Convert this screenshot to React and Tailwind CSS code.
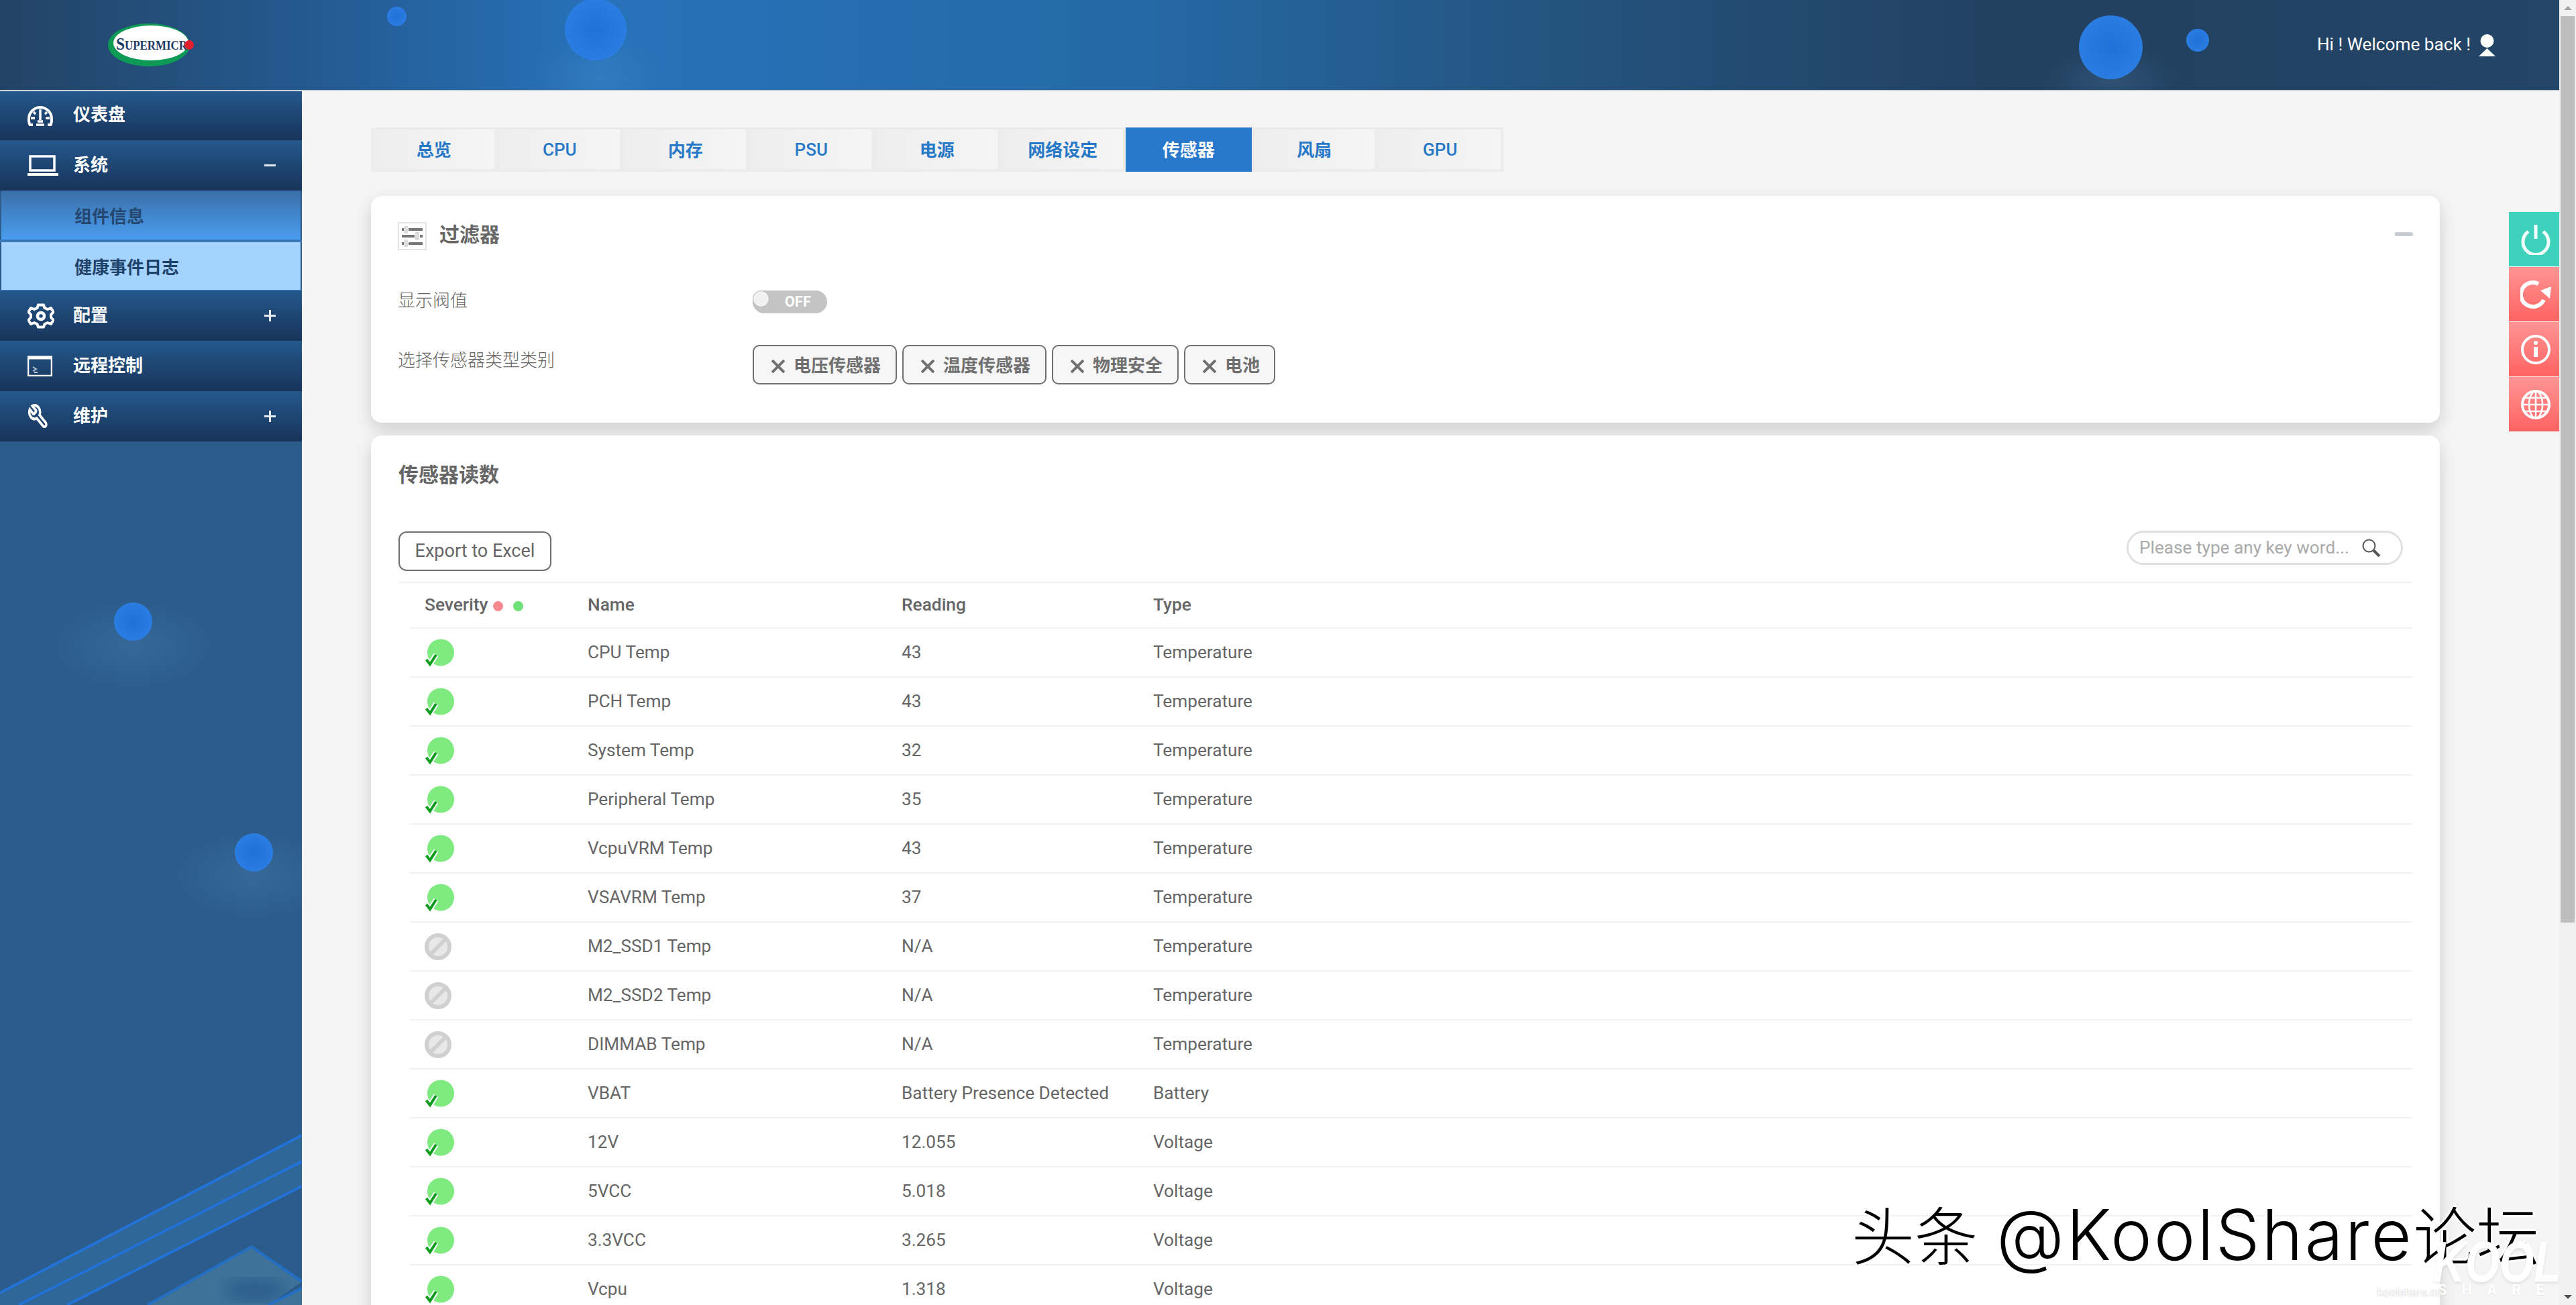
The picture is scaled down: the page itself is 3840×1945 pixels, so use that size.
import React from "react";

const tabs = ["总览", "CPU", "内存", "PSU", "电源", "网络设定", "传感器", "风扇", "GPU"];
const chips = [
  ["电压传感器", "w-[215px]"],
  ["温度传感器", "w-[215px]"],
  ["物理安全", "w-[189px]"],
  ["电池", "w-[136px]"],
];
const rows = [
  ["ok", "CPU Temp", "43", "Temperature"],
  ["ok", "PCH Temp", "43", "Temperature"],
  ["ok", "System Temp", "32", "Temperature"],
  ["ok", "Peripheral Temp", "35", "Temperature"],
  ["ok", "VcpuVRM Temp", "43", "Temperature"],
  ["ok", "VSAVRM Temp", "37", "Temperature"],
  ["na", "M2_SSD1 Temp", "N/A", "Temperature"],
  ["na", "M2_SSD2 Temp", "N/A", "Temperature"],
  ["na", "DIMMAB Temp", "N/A", "Temperature"],
  ["ok", "VBAT", "Battery Presence Detected", "Battery"],
  ["ok", "12V", "12.055", "Voltage"],
  ["ok", "5VCC", "5.018", "Voltage"],
  ["ok", "3.3VCC", "3.265", "Voltage"],
  ["ok", "Vcpu", "1.318", "Voltage"],
];

function OkIcon() {
  return (
    <svg width="46" height="42" viewBox="0 0 46 42" className="block">
      <circle cx="24" cy="20.500" r="20" fill="#7eea80" />
      <path d="M2.500 31 L8 38 L17 24" fill="none" stroke="#ffffff" strokeWidth="8" />
      <path d="M2.500 31 L8 38 L17 24" fill="none" stroke="#0b9b1d" strokeWidth="4" />
    </svg>
  );
}

function NaIcon() {
  return (
    <svg width="40" height="40" viewBox="0 0 40 40" className="block">
      <circle cx="20" cy="20" r="17" fill="#e8e8e8" stroke="#d0d0d0" strokeWidth="6" />
      <path d="M9 31 L31 9" stroke="#d0d0d0" strokeWidth="6" />
    </svg>
  );
}

function GaugeIcon() {
  return (
    <svg width="38" height="31" viewBox="0 0 38 31" fill="none" stroke="#fff" className="block">
      <path d="M8 29 H3.500 A17 17 0 0 1 2 20 A17 17 0 0 1 36 20 A17 17 0 0 1 34.500 29 H30" strokeWidth="4" />
      <path d="M19 6 V22 M13 29 H25 M15 24 H23 M5 19 H11 M27 19 H33 M9 10 L12 13 M29 10 L26 13" strokeWidth="3.500" />
    </svg>
  );
}

function LaptopIcon() {
  return (
    <svg width="46" height="31" viewBox="0 0 46 31" fill="none" stroke="#fff" className="block">
      <rect x="4" y="2" width="36" height="21" strokeWidth="3.500" />
      <path d="M0 29 H46" strokeWidth="4" />
    </svg>
  );
}

function GearIcon() {
  return (
    <svg width="40" height="38" viewBox="0 0 40 38" fill="none" stroke="#fff" className="block">
      <path
        d="M16 2.500 H24 L25.500 7 L30 9 L35 7 L38.500 13 L35 17 V21 L38.500 25 L35 31 L30 29 L25.500 31 L24 35.500 H16 L14.500 31 L10 29 L5 31 L1.500 25 L5 21 V17 L1.500 13 L5 7 L10 9 L14.500 7 Z"
        strokeWidth="4"
        strokeLinejoin="round"
      />
      <circle cx="20" cy="19" r="5" strokeWidth="4.500" />
    </svg>
  );
}

function ConsoleIcon() {
  return (
    <svg width="37" height="31" viewBox="0 0 37 31" fill="none" className="block">
      <rect x="1" y="2" width="35" height="28" stroke="#fff" strokeWidth="2.500" />
      <path d="M0 3 H37" stroke="#fff" strokeWidth="5" />
      <path d="M8 17 L13 20 L8 23 M10 25 H15" stroke="#b9c6d4" strokeWidth="2" />
    </svg>
  );
}

function WrenchIcon() {
  return (
    <svg width="32" height="40" viewBox="0 0 24 24" preserveAspectRatio="none" fill="none" stroke="#fff" strokeWidth="2.500" className="block -scale-x-100">
      <path d="M14.700 6.300a1 1 0 0 0 0 1.400l1.600 1.600a1 1 0 0 0 1.400 0l3.770-3.770a6 6 0 0 1-7.940 7.940l-6.910 6.910a2.120 2.120 0 0 1-3-3l6.910-6.910a6 6 0 0 1 7.940-7.940l-3.760 3.760z" />
    </svg>
  );
}

function PlusMinus({ plus }) {
  return (
    <svg width="17" height="17" viewBox="0 0 17 17" stroke="#e6ecf2" strokeWidth="3" className="block">
      <path d="M0 8.500 H17" />
      {plus && <path d="M8.500 0 V17" />}
    </svg>
  );
}

function Logo() {
  return (
    <svg width="130" height="64" viewBox="0 0 130 64" className="block">
      <ellipse cx="61" cy="32" rx="61" ry="32" fill="#0e9a55" />
      <ellipse cx="64" cy="29" rx="56" ry="26" fill="#ffffff" />
      <text x="12" y="39" textLength="106" lengthAdjust="spacingAndGlyphs" fontFamily="'Liberation Serif', serif" fill="#1c3a66" fontSize="18" fontWeight="700">
        <tspan fontSize="25">S</tspan>UPERMICR
      </text>
      <circle cx="121" cy="32" r="7" fill="#e0202a" />
    </svg>
  );
}

function SideItem({ icon, label, mark, first }) {
  return (
    <div className={"flex items-center pl-[41px] pr-[39px] bg-gradient-to-b from-[#25588c] to-[#17345a] relative z-10 " + (first ? "h-[73px]" : "h-[75px]")}>
      <div className="w-[68px] flex items-center">{icon}</div>
      <div className={"flex-1 text-[26px] leading-none font-bold text-white " + (first ? "-mt-1" : "-mt-px")}>{label}</div>
      {mark}
    </div>
  );
}

function Blob({ className }) {
  return <div className={"absolute rounded-full bg-[radial-gradient(circle,#1f70d8,#2f82e6)] " + className} />;
}

function Glow({ className }) {
  return <div className={"absolute bg-[radial-gradient(ellipse_at_center,rgba(110,170,220,0.16),rgba(110,170,220,0)_70%)] " + className} />;
}

function SidebarArt() {
  return (
    <svg width="450" height="300" viewBox="0 0 450 300" className="absolute left-0 bottom-0 block">
      <defs>
        <filter id="soft">
          <feGaussianBlur stdDeviation="12" />
        </filter>
      </defs>
      <polygon points="0,282 450,47 450,123 100,300 0,300" fill="#2e6798" />
      <polygon points="375,213 450,265 400,300 220,300" fill="#3f7299" />
      <ellipse cx="380" cy="278" rx="45" ry="16" fill="#2b5c8c" filter="url(#soft)" />
      <polygon points="450,275 400,300 450,300" fill="#3f7299" />
      <g fill="none" stroke="#2272d8" strokeWidth="4">
        <path d="M0 282 L450 47" />
        <path d="M28 300 L450 86" />
        <path d="M100 300 L450 123" />
      </g>
      <g fill="none" stroke="#236fc4" strokeWidth="4">
        <path d="M220 300 L375 213 L450 265" />
        <path d="M400 300 L450 275" />
      </g>
    </svg>
  );
}

function Sidebar() {
  return (
    <aside className="w-[450px] shrink-0 relative bg-[#2b5c8c] overflow-hidden">
      <SideItem first icon={<GaugeIcon />} label="仪表盘" />
      <SideItem icon={<LaptopIcon />} label="系统" mark={<PlusMinus />} />
      <div className="h-[73px] ml-[2px] mr-[2px] flex items-center pl-[109px] text-[26px] font-bold text-[#25476f] bg-gradient-to-b from-[#3a6fa8] to-[#4a9df0] relative z-10">
        <span className="mt-[6px]">组件信息</span>
      </div>
      <div className="h-[4px] bg-[#3a78b8] relative z-10" />
      <div className="h-[71px] ml-[2px] mr-[2px] flex items-center pl-[109px] text-[26px] font-bold text-[#1f4269] bg-[#a4d3ff] relative z-10">
        <span className="mt-[6px]">健康事件日志</span>
      </div>
      <div className="h-px bg-[#3a78b8] relative z-10" />
      <SideItem icon={<GearIcon />} label="配置" mark={<PlusMinus plus />} />
      <SideItem icon={<ConsoleIcon />} label="远程控制" />
      <SideItem icon={<WrenchIcon />} label="维护" mark={<PlusMinus plus />} />
      <Glow className="left-[78px] top-[760px] w-[240px] h-[130px]" />
      <Glow className="left-[258px] top-[1104px] w-[240px] h-[130px]" />
      <Blob className="left-[170px] top-[762px] w-[57px] h-[57px]" />
      <Blob className="left-[350px] top-[1106px] w-[57px] h-[57px]" />
      <SidebarArt />
    </aside>
  );
}

function Header() {
  return (
    <header className="h-[136px] shrink-0 border-b-2 border-[#cfd4d9] relative overflow-hidden flex items-center justify-end bg-[linear-gradient(90deg,#234365_0,#24598f_450px,#2772ba_900px,#2569a6_1700px,#245480_2300px,#224060_3000px,#234567_3815px)]">
      <div className="absolute left-[161px] top-[35px]">
        <Logo />
      </div>
      <Glow className="left-[790px] top-[50px] w-[200px] h-[130px]" />
      <Glow className="left-[3046px] top-[70px] w-[200px] h-[100px]" />
      <Blob className="left-[577px] top-[10px] w-[29px] h-[29px]" />
      <Blob className="left-[842px] top-[-2px] w-[92px] h-[92px]" />
      <Blob className="left-[3099px] top-[23px] w-[95px] h-[95px]" />
      <Blob className="left-[3259px] top-[43px] w-[34px] h-[34px]" />
      <div className="relative flex items-center pr-[95px]">
        <span className="text-[26.200px] leading-none text-white -mt-[2px]">Hi ! Welcome back !</span>
        <svg width="25" height="33" viewBox="0 0 25 33" fill="#fff" className="block ml-[12px]">
          <circle cx="12.500" cy="10" r="10" />
          <path d="M12.500 21 L25 33 H0 Z" />
        </svg>
      </div>
    </header>
  );
}

function Tabs() {
  return (
    <div className="w-[1688px] h-[66px] flex bg-[#ececec]">
      {tabs.map((t) =>
        t === "传感器" ? (
          <div key={t} className="w-[187.500px] h-full flex items-center justify-center bg-[#2878cc] text-white text-[26px] font-bold">
            <span className="mt-[3px]">{t}</span>
          </div>
        ) : (
          <div key={t} className="w-[187.500px] h-full pl-[4px] pr-[4px] pt-[3px] pb-[4px]">
            <div className={"w-full h-full flex items-center justify-center bg-gradient-to-r from-[#eeeeee] to-[#f5f5f5] text-[#2878c8] text-[26px] " + (t.match(/[A-Z]/) ? "font-medium" : "font-bold")}>
              <span className={t.match(/[A-Z]/) ? "mt-px" : "mt-[3px]"}>{t}</span>
            </div>
          </div>
        )
      )}
    </div>
  );
}

function FilterIcon() {
  return (
    <svg width="43" height="42" viewBox="0 0 43 42" className="block shrink-0">
      <rect x="1" y="1" width="41" height="40" fill="#fff" stroke="#e4e4e4" strokeWidth="2" />
      <g stroke="#dddddd" strokeWidth="6">
        <path d="M12 6 V17 M29 15 V27 M12 26 V37" />
      </g>
      <g stroke="#777777" strokeWidth="4">
        <path d="M6 11 H9 M16 11 H37 M6 21 H25 M33 21 H37 M6 32 H9 M16 32 H37" />
      </g>
    </svg>
  );
}

function FilterCard() {
  return (
    <section className="mt-[36px] w-[3084px] h-[338px] bg-white rounded-[16px] shadow-[0_10px_26px_rgba(0,0,0,0.16)] px-[40px] pt-[39px]">
      <div className="flex justify-between">
        <div className="flex items-center h-[42px]">
          <FilterIcon />
          <h2 className="ml-[19px] -mt-[5px] text-[30px] font-bold text-[#666666]">过滤器</h2>
        </div>
        <div className="mt-[15px] w-[27px] h-[6px] rounded-[2px] bg-[#c8cdd4]" />
      </div>
      <div className="mt-[60px] flex items-start">
        <div className="w-[529px] text-[26px] leading-[30px] font-light text-[#666666]">显示阀值</div>
        <div className="w-[111px] h-[34px] rounded-full bg-[#c4c4c4] relative flex items-center justify-end pr-[24px]">
          <span className="text-[22px] leading-none font-bold text-white">OFF</span>
          <div className="absolute left-0 top-0 w-[25px] h-[25px] rounded-full bg-[#f1f1f1] border border-[#b5b5b5]" />
        </div>
      </div>
      <div className="mt-[47px] flex items-start">
        <div className="w-[529px] text-[26px] leading-[46px] font-light text-[#666666]">选择传感器类型类别</div>
        <div className="flex gap-[8px]">
          {chips.map(([c, w]) => (
            <div key={c} className={"h-[59px] flex items-center pl-[26px] border-2 border-[#707070] rounded-[10px] bg-[#f6f6f6] text-[26px] font-bold text-[#707070] " + w}>
              <svg width="20" height="20" viewBox="0 0 20 20" stroke="#707070" strokeWidth="4" className="block mr-[13px] mt-[5px] shrink-0">
                <path d="M1 1 L19 19 M19 1 L1 19" />
              </svg>
              <span className="mt-[3px]">{c}</span>
            </div>
          ))}
        </div>
      </div>
    </section>
  );
}

function SearchBox() {
  return (
    <div className="-mt-px w-[412px] h-[51px] rounded-full border-[3px] border-[#e0e0e0] bg-white flex items-center pl-[16px]">
      <span className="w-[332px] text-[26.200px] leading-none text-[#aaaaaa] whitespace-nowrap">Please type any key word...</span>
      <svg width="28" height="27" viewBox="0 0 28 27" fill="none" className="block">
        <circle cx="10.500" cy="10.500" r="9" stroke="#555555" strokeWidth="2" />
        <path d="M17 17 L26 26" stroke="#555555" strokeWidth="4" />
      </svg>
    </div>
  );
}

function SensorCard() {
  return (
    <section className="mt-[19px] w-[3084px] h-[1400px] bg-white rounded-[16px] shadow-[0_10px_26px_rgba(0,0,0,0.16)] pl-[41px] pr-[41px] pt-[40px]">
      <h2 className="h-[38px] leading-[38px] text-[30px] font-bold text-[#666666]">传感器读数</h2>
      <div className="mt-[65px] mb-[16px] flex justify-between items-start pr-[14px]">
        <button className="w-[228px] h-[59px] rounded-[12px] border-2 border-[#707070] bg-white text-[27px] text-[#666666]">Export to Excel</button>
        <SearchBox />
      </div>
      <div className="border-t-2 border-[#f2f2f2]">
        <div className="ml-[17px] pl-[22px] h-[68px] border-b-2 border-[#f2f2f2] grid grid-cols-[243px_468px_375px_1fr] items-center text-[26.300px] font-medium text-[#666666]">
          <div className="flex items-center">
            Severity
            <span className="ml-[8px] mt-[3px] w-[15px] h-[15px] rounded-full bg-[#f88a8f]" />
            <span className="ml-[15px] mt-[3px] w-[15px] h-[15px] rounded-full bg-[#6fe077]" />
          </div>
          <div>Name</div>
          <div>Reading</div>
          <div>Type</div>
        </div>
        {rows.map(([s, name, reading, type]) => (
          <div key={name} className="ml-[17px] pl-[22px] h-[73px] border-b-2 border-[#f2f2f2] grid grid-cols-[243px_468px_375px_1fr] items-center text-[26.200px] text-[#666666]">
            <div>{s === "ok" ? <OkIcon /> : <NaIcon />}</div>
            <div>{name}</div>
            <div>{reading}</div>
            <div>{type}</div>
          </div>
        ))}
      </div>
    </section>
  );
}

function SideButton({ teal, children }) {
  return (
    <div className={"w-[75px] h-[81px] flex items-center justify-center pl-[5px] " + (teal ? "bg-[#3ed2bc]" : "bg-gradient-to-b from-[#ff9494] to-[#ff6262]")}>{children}</div>
  );
}

function QuickButtons() {
  return (
    <div className="absolute right-0 top-[180px] flex flex-col gap-px z-20">
      <SideButton teal>
        <svg width="44" height="46" viewBox="0 0 44 46" fill="none" stroke="#f0fdfa" strokeWidth="5" className="block">
          <path d="M22 1 V22" />
          <path d="M11 11 A19 19 0 1 0 33 11" />
        </svg>
      </SideButton>
      <SideButton>
        <svg width="46" height="44" viewBox="0 0 46 44" fill="none" className="block">
          <path d="M35 30 A18 18 0 1 1 27 6" stroke="#fff" strokeWidth="6" />
          <path d="M46 10 L44 28 L30 16 Z" fill="#fff" />
        </svg>
      </SideButton>
      <SideButton>
        <svg width="44" height="44" viewBox="0 0 44 44" fill="none" className="block">
          <circle cx="22" cy="22" r="20" stroke="#fff" strokeWidth="4" />
          <circle cx="22" cy="12" r="3" fill="#fff" />
          <path d="M22 18 V33" stroke="#fff" strokeWidth="6" />
        </svg>
      </SideButton>
      <SideButton>
        <svg width="44" height="44" viewBox="0 0 44 44" fill="none" stroke="#fff" strokeWidth="2.500" className="block">
          <circle cx="22" cy="22" r="20" strokeWidth="4" />
          <ellipse cx="22" cy="22" rx="10" ry="20" />
          <path d="M22 2 V42 M3 22 H41 M6 12 H38 M6 32 H38" />
        </svg>
      </SideButton>
    </div>
  );
}

function ScrollBar() {
  return (
    <div className="w-[25px] shrink-0 h-full bg-[#f1f1f1] flex flex-col items-center">
      <div className="h-[24px] flex items-center justify-center pl-[1px]">
        <div className="w-0 h-0 border-x-[6px] border-x-transparent border-b-[6px] border-b-[#a3a3a3]" />
      </div>
      <div className="w-[21px] h-[1351px] bg-[#bdbdbd]" />
      <div className="flex-1 flex items-end pb-[9px]">
        <div className="w-0 h-0 border-x-[6px] border-x-transparent border-t-[6px] border-t-[#505050]" />
      </div>
    </div>
  );
}

function Watermark() {
  return (
    <div className="absolute left-0 top-0 w-0 h-0 z-30">
      <div className="absolute left-[2760px] top-[1776px] whitespace-nowrap leading-[128px] text-black font-[Inter,'Noto_Sans_CJK_SC',sans-serif] font-light [text-shadow:0_3px_0_#ffffff,0_-3px_0_#ffffff,3px_0_0_#ffffff,-3px_0_0_#ffffff]">
        <span className="text-[94px]">头条</span>
        <span className="text-[104px] tracking-[3px] ml-[28px]">@KoolShare</span>
        <span className="text-[94px]">论坛</span>
      </div>
      <div className="absolute left-[3627px] top-[1848px] origin-top scale-y-[1.3] text-[66px] leading-[50px] italic font-bold text-white whitespace-nowrap font-[Liberation_Sans,sans-serif] [text-shadow:0_2px_4px_rgba(0,0,0,0.08)]">KOOL</div>
      <div className="absolute left-[3634px] top-[1912px] text-[22px] leading-[22px] tracking-[22px] font-bold text-white whitespace-nowrap [text-shadow:0_1px_2px_rgba(0,0,0,0.08)]">SHARE</div>
      <div className="absolute left-[3544px] top-[1917px] text-[17px] leading-[18px] text-white whitespace-nowrap [text-shadow:0_0_2px_rgba(0,0,0,0.3)]">koolshare.cn</div>
    </div>
  );
}

export default function App() {
  return (
    <div className="w-[3840px] h-[1945px] overflow-hidden flex relative bg-[#f5f5f5] font-[Roboto,'Noto_Sans_CJK_SC',sans-serif]">
      <div className="w-[3815px] h-full flex flex-col relative">
        <Header />
        <div className="flex-1 min-h-0 flex relative">
          <Sidebar />
          <main className="flex-1 min-w-0 pl-[103px] pt-[54px] overflow-hidden">
            <Tabs />
            <FilterCard />
            <SensorCard />
          </main>
          <QuickButtons />
        </div>
      </div>
      <ScrollBar />
      <Watermark />
    </div>
  );
}
